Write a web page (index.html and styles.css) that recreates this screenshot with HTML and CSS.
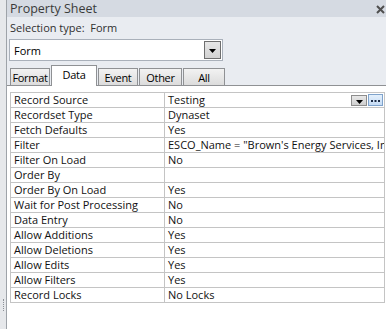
FILE: index.html
```html
<!DOCTYPE html>
<html lang="en">
<head>
    <meta charset="UTF-8">
    <title>Property Sheet</title>
    <link rel="stylesheet" href="styles.css">
</head>
<body>
    <div class="window">
        <!-- edge of the neighbouring pane -->
        <div class="edge"><span class="grip"></span></div>

        <div class="sheet">
            <div class="titlebar">
                <span>Property Sheet</span>
                <svg class="close" width="9" height="9" viewBox="0 0 9 9">
                    <path d="M1 1 L8 8 M8 1 L1 8" stroke="#4f4f4f" stroke-width="2"/>
                </svg>
            </div>

            <div class="selection">Selection type:&nbsp; Form</div>

            <div class="combo">
                <span>Form</span>
                <span class="drop">
                    <svg width="7" height="4" viewBox="0 0 7 4"><path d="M0 0 H7 L3.5 4 Z" fill="#000"/></svg>
                </span>
            </div>

            <div class="tabs">
                <div class="tab tab-format">Format</div>
                <div class="tab tab-data active">Data</div>
                <div class="tab tab-event">Event</div>
                <div class="tab tab-other">Other</div>
                <div class="tab tab-all">All</div>
            </div>

            <div class="page">
                <table class="grid">
                    <tr>
                        <td>Record Source</td>
                        <td>
                            <div class="value-edit">
                                <span class="value-text">Testing</span>
                                <span class="mini-drop">
                                    <svg width="7" height="4" viewBox="0 0 7 4"><path d="M0 0 H7 L3.5 4 Z" fill="#000"/></svg>
                                </span>
                                <span class="builder">
                                    <svg width="9" height="2" viewBox="0 0 9 2">
                                        <rect x="0" y="0" width="2" height="2" fill="#1a2a44"/>
                                        <rect x="3.5" y="0" width="2" height="2" fill="#1a2a44"/>
                                        <rect x="7" y="0" width="2" height="2" fill="#1a2a44"/>
                                    </svg>
                                </span>
                            </div>
                        </td>
                    </tr>
                    <tr><td>Recordset Type</td><td>Dynaset</td></tr>
                    <tr><td>Fetch Defaults</td><td>Yes</td></tr>
                    <tr><td>Filter</td><td>ESCO_Name = "Brown's Energy Services, Inc."</td></tr>
                    <tr><td>Filter On Load</td><td>No</td></tr>
                    <tr><td>Order By</td><td></td></tr>
                    <tr><td>Order By On Load</td><td>Yes</td></tr>
                    <tr><td>Wait for Post Processing</td><td>No</td></tr>
                    <tr><td>Data Entry</td><td>No</td></tr>
                    <tr><td>Allow Additions</td><td>Yes</td></tr>
                    <tr><td>Allow Deletions</td><td>Yes</td></tr>
                    <tr><td>Allow Edits</td><td>Yes</td></tr>
                    <tr><td>Allow Filters</td><td>Yes</td></tr>
                    <tr><td>Record Locks</td><td>No Locks</td></tr>
                </table>
            </div>
        </div>
    </div>
</body>
</html>
```

FILE: styles.css
```css
/* General Styles */
body {
    margin: 0;
    padding: 0;
    font-family: "Open Sans", "Noto Sans", sans-serif;
    font-size: 11px;
    color: #000;
    background-color: #ffffff;
}

.window {
    display: flex;
    width: 386px;
    height: 329px;
    overflow: hidden;
}

/* Left pane edge */
.edge {
    width: 7px;
    background-color: #e6e8eb;
    border-right: 1px solid #9ea3a9;
    display: flex;
    align-items: flex-end;
    padding-bottom: 18px;
    box-sizing: border-box;
}

.grip {
    width: 2px;
    height: 12px;
    margin-left: 3px;
    border-left: 1px dotted #8c9097;
}

.sheet {
    flex: 1;
    display: flex;
    flex-direction: column;
    background-color: #e9ecf1;
}

.titlebar {
    height: 17px;
    display: flex;
    justify-content: space-between;
    align-items: center;
    padding: 0 1px 0 3px;
    background-color: #d5dae2;
    font-size: 12.5px;
    color: #3a3a3a;
}

.close {
    margin-top: 1px;
}

.selection {
    height: 21px;
    line-height: 22px;
    padding-left: 3px;
    color: #303030;
}

/* Object combo box */
.combo {
    width: 214px;
    height: 22px;
    margin: 1px 0 0 2px;
    display: flex;
    align-items: center;
    justify-content: space-between;
    background: #ffffff;
    border: 1px solid #a9b0ba;
    box-sizing: border-box;
    padding: 0 1px 0 4px;
}

.drop {
    width: 17px;
    height: 18px;
    display: flex;
    align-items: center;
    justify-content: center;
    background: linear-gradient(#e6e6e6, #d2d2d2);
    border: 1px solid #6e6e6e;
    box-sizing: border-box;
    padding-top: 2px;
}

/* Tabs */
.tabs {
    height: 20px;
    margin-top: 4px;
    display: flex;
    align-items: flex-end;
    gap: 1px;
    padding-left: 3px;
    border-bottom: 1px solid #8f9194;
}

.tab {
    height: 17px;
    line-height: 17px;
    text-align: center;
    font-size: 11px;
    letter-spacing: -0.3px;
    white-space: nowrap;
    background: linear-gradient(#f2f2f2, #dcdcdc);
    border: 1px solid #8f9194;
    border-bottom: none;
    box-sizing: border-box;
}

.tab-format { width: 40px; }
.tab-data   { width: 46px; }
.tab-event  { width: 40px; }
.tab-other  { width: 43px; }
.tab-all    { width: 42px; }

.tab.active {
    height: 21px;
    line-height: 17px;
    background: #ffffff;
    margin-bottom: -1px;
}

/* Property grid */
.page {
    flex: 1;
    background: #ffffff;
    padding: 6px 0 0 3px;
}

.grid {
    width: 375px;
    table-layout: fixed;
    border-collapse: collapse;
}

.grid td {
    height: 14px;
    padding: 0 0 0 3px;
    line-height: 14px;
    border: 1px solid #c4c4c4;
    white-space: nowrap;
    overflow: hidden;
    color: #111;
}

.grid td:first-child {
    width: 150px;
}

.value-edit {
    display: flex;
    align-items: center;
}

.value-text {
    flex: 1;
}

.mini-drop {
    width: 16px;
    height: 11px;
    margin-top: 1px;
    display: flex;
    align-items: flex-end;
    justify-content: center;
    padding-bottom: 1px;
    box-sizing: border-box;
    background: linear-gradient(#e8e8e8, #cfcfcf);
    border: 1px solid #8d8d8d;
}

.builder {
    width: 15px;
    height: 12px;
    margin: 0 1px 0 1px;
    display: flex;
    align-items: center;
    justify-content: center;
    padding-top: 2px;
    background: linear-gradient(#e4f0fc, #c6dcf5);
    border: 1px solid #7fa3cc;
    box-sizing: border-box;
}
```
